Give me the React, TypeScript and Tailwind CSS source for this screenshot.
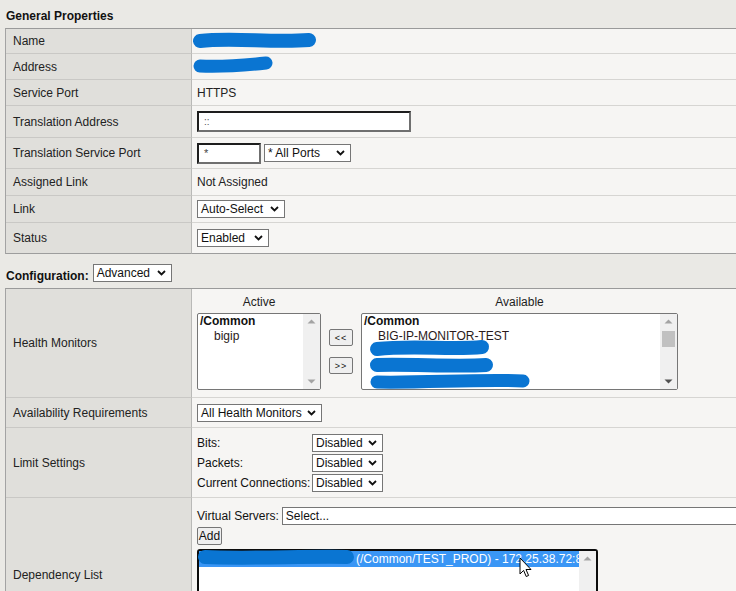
import React from "react";

const Chevron = () => (
  <svg width="9" height="6" viewBox="0 0 9 6" className="shrink-0">
    <path d="M1 1 L4.5 4.5 L8 1" stroke="#111" strokeWidth="1.8" fill="none" />
  </svg>
);

function Sel({ text, w }: { text: string; w: string }) {
  return (
    <div
      className={`${w} h-[18px] bg-white border border-[#767676] flex items-center justify-between pl-[3px] pr-[5px] text-[12px] leading-[14px] text-[#111] shrink-0`}
    >
      <span className="whitespace-nowrap">{text}</span>
      <Chevron />
    </div>
  );
}

function Row({
  label,
  h,
  children,
  last,
}: {
  label: string;
  h: string;
  children?: React.ReactNode;
  last?: boolean;
}) {
  return (
    <div className={`grid grid-cols-[186px_1fr] ${h}`}>
      <div
        className={`bg-[#e0dfdb] border-r border-r-[#b9b9b7] border-b ${
          last ? "border-b-[#9d9d9d]" : "border-b-[#c9c8c5]"
        } flex items-center pl-[7px] text-[#222]`}
      >
        {label}
      </div>
      <div
        className={`relative bg-[#f6f5f3] border-b ${
          last ? "border-b-[#9d9d9d]" : "border-b-[#d6d5d2]"
        } flex items-center pl-[5px]`}
      >
        {children}
      </div>
    </div>
  );
}

function Scroll({ thumb, darkDown }: { thumb?: boolean; darkDown?: boolean }) {
  return (
    <div className="w-[17px] h-full bg-[#f0f0f0] relative shrink-0">
      <svg width="9" height="5" viewBox="0 0 9 5" className="absolute left-[4px] top-[5px]">
        <path d="M0.5 4.5 L4.5 0.5 L8.5 4.5 Z" fill="#a3a3a3" />
      </svg>
      {thumb && <div className="absolute left-[2px] top-[17px] w-[13px] h-[16px] bg-[#c1c1c1]" />}
      <svg width="9" height="5" viewBox="0 0 9 5" className="absolute left-[4px] bottom-[5px]">
        <path d="M0.5 0.5 L8.5 0.5 L4.5 4.5 Z" fill={darkDown ? "#505050" : "#a3a3a3"} />
      </svg>
    </div>
  );
}

function Btn({ children, cls }: { children: React.ReactNode; cls: string }) {
  return (
    <div
      className={`${cls} bg-[#efefef] border border-[#767676] rounded-[2px] flex items-center justify-center text-[#111]`}
    >
      {children}
    </div>
  );
}

const BLUE = "#0a75d2";

export default function App() {
  return (
    <div className="w-[736px] h-[591px] overflow-hidden bg-[#eae9e5] text-[12px] leading-[14px] text-[#1e1e1e] font-['Liberation_Sans',Arial,sans-serif]">
      <div className="h-[28px] pl-[6px] pt-[9px] font-bold text-[#111]">General Properties</div>

      <div className="ml-[5px] w-[740px] border-l border-t border-l-[#a3a3a3] border-t-[#9a9a9a]">
        <Row label="Name" h="h-[25px]">
          <svg width="140" height="24" className="absolute left-0 top-0">
            <path d="M8 12 C 40 8, 80 14, 117 11" stroke={BLUE} strokeWidth="14" strokeLinecap="round" fill="none" />
          </svg>
        </Row>
        <Row label="Address" h="h-[26px]">
          <svg width="100" height="25" className="absolute left-0 top-0">
            <path d="M8 12 C 30 13, 55 11, 74 9" stroke={BLUE} strokeWidth="13" strokeLinecap="round" fill="none" />
          </svg>
        </Row>
        <Row label="Service Port" h="h-[26px]">
          <span className="text-[#222]">HTTPS</span>
        </Row>
        <Row label="Translation Address" h="h-[32px]">
          <div className="w-[214px] h-[21px] bg-white border-2 border-[#1d1d1d] border-r-[#6f6f6f] border-b-[#6f6f6f] pl-[5px] flex items-center text-[10px] text-[#555]">
            ::
          </div>
        </Row>
        <Row label="Translation Service Port" h="h-[31px]">
          <div className="flex items-center gap-[3px]">
            <div className="w-[64px] h-[21px] bg-white border-2 border-[#1d1d1d] border-r-[#6f6f6f] border-b-[#6f6f6f] pl-[5px] flex items-center text-[11px] text-[#444]">
              *
            </div>
            <Sel text="* All Ports" w="w-[87px]" />
          </div>
        </Row>
        <Row label="Assigned Link" h="h-[27px]">
          <span className="text-[#222]">Not Assigned</span>
        </Row>
        <Row label="Link" h="h-[27px]">
          <Sel text="Auto-Select" w="w-[88px]" />
        </Row>
        <Row label="Status" h="h-[31px]" last>
          <Sel text="Enabled" w="w-[72px]" />
        </Row>
      </div>

      <div className="h-[34px] pl-[6px] pt-[10px] flex items-start gap-[4px]">
        <span className="font-bold text-[#111] mt-[5px]">Configuration:</span>
        <Sel text="Advanced" w="w-[79px]" />
      </div>

      <div className="ml-[5px] w-[740px] border-l border-t border-l-[#a3a3a3] border-t-[#9a9a9a]">
        <div className="grid grid-cols-[186px_1fr] h-[109px]">
          <div className="bg-[#e0dfdb] border-r border-r-[#b9b9b7] border-b border-b-[#c9c8c5] flex items-center pl-[7px] text-[#222]">
            Health Monitors
          </div>
          <div className="bg-[#f6f5f3] border-b border-b-[#d6d5d2] flex items-start pl-[5px] pt-[6px]">
            <div className="flex flex-col w-[124px]">
              <div className="text-center h-[14px]">Active</div>
              <div className="mt-[4px] h-[77px] bg-white border border-[#767676] rounded-[2px] flex">
                <div className="flex-1 pl-[2px] leading-[15px] text-[#111]">
                  <div className="font-bold">/Common</div>
                  <div className="pl-[14px] text-[#2a1a1a]">bigip</div>
                </div>
                <Scroll />
              </div>
            </div>
            <div className="flex flex-col ml-[8px] mt-[34px] gap-[11px]">
              <Btn cls="w-[24px] h-[17px] text-[9px] tracking-[1px]">&lt;&lt;</Btn>
              <Btn cls="w-[24px] h-[17px] text-[9px] tracking-[1px]">&gt;&gt;</Btn>
            </div>
            <div className="flex flex-col w-[317px] ml-[8px]">
              <div className="text-center h-[14px]">Available</div>
              <div className="mt-[4px] h-[77px] bg-white border border-[#767676] rounded-[2px] flex relative">
                <div className="flex-1 pl-[2px] leading-[15px] text-[#111] overflow-hidden">
                  <div className="font-bold">/Common</div>
                  <div className="pl-[14px] text-[#2a1a1a]">BIG-IP-MONITOR-TEST</div>
                </div>
                <Scroll thumb darkDown />
                <svg width="200" height="77" className="absolute left-0 top-0">
                  <path d="M15 35 C 50 31, 90 36, 120 33" stroke={BLUE} strokeWidth="14" strokeLinecap="round" fill="none" />
                  <path d="M15 51 C 50 50, 95 53, 124 51" stroke={BLUE} strokeWidth="14" strokeLinecap="round" fill="none" />
                  <path d="M15 68 C 60 69, 120 65, 161 67" stroke={BLUE} strokeWidth="13" strokeLinecap="round" fill="none" />
                </svg>
              </div>
            </div>
          </div>
        </div>

        <Row label="Availability Requirements" h="h-[30px]">
          <Sel text="All Health Monitors" w="w-[125px]" />
        </Row>

        <div className="grid grid-cols-[186px_1fr] h-[70px]">
          <div className="bg-[#e0dfdb] border-r border-r-[#b9b9b7] border-b border-b-[#c9c8c5] flex items-center pl-[7px] text-[#222]">
            Limit Settings
          </div>
          <div className="bg-[#f6f5f3] border-b border-b-[#d6d5d2] pl-[5px] pt-[6px] flex flex-col">
            {["Bits:", "Packets:", "Current Connections:"].map((l) => (
              <div key={l} className="h-[20px] flex items-start">
                <span className="w-[115px] mt-[2px] text-[#111]">{l}</span>
                <Sel text="Disabled" w="w-[71px]" />
              </div>
            ))}
          </div>
        </div>

        <div className="grid grid-cols-[186px_1fr] h-[154px]">
          <div className="bg-[#e0dfdb] border-r border-r-[#b9b9b7] border-b border-b-[#c9c8c5] flex items-center pl-[7px] text-[#222]">
            Dependency List
          </div>
          <div className="bg-[#f6f5f3] border-b border-b-[#d6d5d2] pl-[5px] pt-[9px] flex flex-col">
            <div className="flex items-center gap-[3px] h-[18px]">
              <span className="text-[#111] whitespace-nowrap">Virtual Servers:</span>
              <div className="w-[470px] h-[18px] bg-white border border-[#767676] pl-[3px] flex items-center shrink-0 text-[#111]">
                Select...
              </div>
            </div>
            <Btn cls="w-[25px] h-[18px] mt-[2px] text-[12px]">Add</Btn>
            <div className="mt-[4px] w-[401px] h-[100px] bg-white border-2 border-[#0c0c0c] rounded-[3px] flex relative">
              <div className="flex-1 overflow-hidden">
                <div className="h-[16px] bg-[#3a96f5] text-white whitespace-nowrap pl-[157px] flex items-center">
                  (/Common/TEST_PROD) - 172.25.38.72:8443
                </div>
              </div>
              <Scroll />
              <svg width="170" height="20" className="absolute left-[-2px] top-[-4px]">
                <path d="M8 10 C 50 12, 110 9, 150 10" stroke={BLUE} strokeWidth="14" strokeLinecap="round" fill="none" />
              </svg>
              <svg width="14" height="22" viewBox="0 0 14 22" className="absolute left-[320px] top-[6px]">
                <path d="M1 1 L1 17 L4.6 13.4 L7.2 19.5 L9.6 18.5 L7 12.5 L12 12.5 Z" fill="white" stroke="black" strokeWidth="1" strokeLinejoin="round" />
              </svg>
            </div>
          </div>
        </div>
      </div>
    </div>
  );
}
